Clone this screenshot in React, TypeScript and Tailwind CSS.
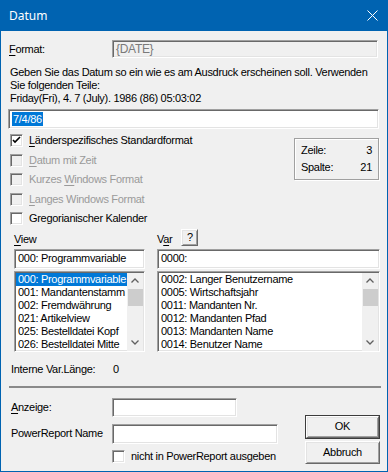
import type { ReactNode } from "react";

const sunken =
  "border border-t-[#a0a0a0] border-l-[#a0a0a0] border-b-white border-r-white shadow-[inset_1px_1px_0_#696969,inset_-1px_-1px_0_#e3e3e3]";
const raised =
  "border border-t-white border-l-white border-b-[#696969] border-r-[#696969] shadow-[inset_1px_1px_0_#e3e3e3,inset_-1px_-1px_0_#a0a0a0] bg-[#f0f0f0]";

function U({ children }: { children: ReactNode }) {
  return <span className="underline underline-offset-2">{children}</span>;
}

function Check({ checked, disabled, children }: { checked?: boolean; disabled?: boolean; children: ReactNode }) {
  return (
    <div className="flex items-center h-[19.5px]">
      <div className={`w-[13px] h-[13px] ${sunken} ${disabled ? "bg-[#f0f0f0]" : "bg-white"} flex items-center justify-center`}>
        {checked && (
          <svg width="9" height="9" viewBox="0 0 9 9">
            <path d="M1 4 L3 6 L8 1" stroke="#000" strokeWidth="1.6" fill="none" />
          </svg>
        )}
      </div>
      <span className={`ml-[6px] ${disabled ? "text-[#9a9a9a]" : "text-black"}`}>{children}</span>
    </div>
  );
}

function ScrollBar() {
  return (
    <div className="w-[16px] h-full bg-[#f0f0f0] flex flex-col items-center">
      <div className="h-[16px] flex items-center justify-center">
        <svg width="8" height="5" viewBox="0 0 8 5">
          <path d="M0.5 4.5 L4 1 L7.5 4.5" stroke="#606060" strokeWidth="1.3" fill="none" />
        </svg>
      </div>
      <div className="w-[15px] h-[17px] bg-[#cdcdcd]" />
      <div className="flex-1" />
      <div className="h-[16px] flex items-center justify-center">
        <svg width="8" height="5" viewBox="0 0 8 5">
          <path d="M0.5 0.5 L4 4 L7.5 0.5" stroke="#606060" strokeWidth="1.3" fill="none" />
        </svg>
      </div>
    </div>
  );
}

const viewItems = [
  "000: Programmvariable",
  "001: Mandantenstamm",
  "002: Fremdwährung",
  "021: Artikelview",
  "025: Bestelldatei Kopf",
  "026: Bestelldatei Mitte",
];

const varItems = [
  "0002: Langer Benutzername",
  "0005: Wirtschaftsjahr",
  "0011: Mandanten Nr.",
  "0012: Mandanten Pfad",
  "0013: Mandanten Name",
  "0014: Benutzer Name",
];

export default function App() {
  return (
    <div
      className="w-[388px] h-[472px] bg-[#f0f0f0] border border-t-0 border-[#0063b1] flex flex-col text-[11px] leading-[13px] tracking-[-0.3px] text-black overflow-hidden"
      style={{ fontFamily: '"Liberation Sans", Arial, sans-serif' }}
    >
      {/* title bar */}
      <div className="h-[31px] bg-[#0063b1] flex items-center justify-between pl-[9px] pr-[9px] -mx-px tracking-normal">
        <span className="text-white text-[12px]" style={{ fontFamily: '"Noto Sans", sans-serif' }}>
          Datum
        </span>
        <svg width="11" height="11" viewBox="0 0 11 11" className="mr-[1px]">
          <path d="M0.5 0.5 L10.5 10.5 M10.5 0.5 L0.5 10.5" stroke="#fff" strokeWidth="1" />
        </svg>
      </div>

      <div className="flex flex-col px-[7px]">
        {/* format */}
        <div className="flex items-center mt-[9px] h-[18px]">
          <span className="w-[104px] pl-[1px]">
            <U>F</U>ormat:
          </span>
          <div className={`w-[266px] h-[18px] ${sunken} bg-[#f0f0f0] text-[#7a7a7a] flex items-center pl-[3px] text-[12px]`}>
            {"{DATE}"}
          </div>
        </div>

        <div className="mt-[8px] pl-[2px] whitespace-nowrap">
          <div>Geben Sie das Datum so ein wie es am Ausdruck erscheinen soll. Verwenden</div>
          <div>Sie folgenden Teile:</div>
          <div>Friday(Fri), 4. 7 (July). 1986 (86) 05:03:02</div>
        </div>

        <div className={`mt-[4px] w-[371px] h-[20px] ${sunken} bg-white flex items-center pl-[3px]`}>
          <span className="bg-[#0078d7] text-white px-[1px] leading-[14px]">7/4/86</span>
        </div>

        {/* checkboxes + position box */}
        <div className="flex justify-between mt-[2px]">
          <div className="flex flex-col pl-[2px]">
            <Check checked>
              <U>L</U>änderspezifisches Standardformat
            </Check>
            <Check disabled>
              <U>D</U>atum mit Zeit
            </Check>
            <Check disabled>
              Kurzes <U>W</U>indows Format
            </Check>
            <Check disabled>
              <U>L</U>anges Windows Format
            </Check>
            <Check>Gregorianischer Kalender</Check>
          </div>
          <div className="mt-[7px] mr-[1px] w-[85px] h-[42px] border border-[#a0a0a0] shadow-[inset_1px_1px_0_#fff,1px_1px_0_#fff] flex flex-col justify-center px-[6px] gap-[4px]">
            <div className="flex justify-between">
              <span>Zeile:</span>
              <span>3</span>
            </div>
            <div className="flex justify-between">
              <span>Spalte:</span>
              <span>21</span>
            </div>
          </div>
        </div>

        {/* view / var */}
        <div className="flex mt-[1px] pl-[6px] gap-[12px]">
          <div className="w-[131px] flex flex-col">
            <div className="h-[16px] flex items-end">
              <span>
                <U>V</U>iew
              </span>
            </div>
            <div className={`mt-[3px] h-[20px] ${sunken} bg-white flex items-center pl-[3px]`}>
              000: Programmvariable
            </div>
            <div className={`mt-[2px] h-[81px] ${sunken} bg-white px-[1px] pt-[1px] flex`}>
              <div className="flex-1 flex flex-col overflow-hidden">
                {viewItems.map((t, i) => (
                  <div
                    key={t}
                    className={`h-[13px] shrink-0 pl-[2px] whitespace-nowrap ${i === 0 ? "bg-[#0078d7] text-white" : ""}`}
                  >
                    {t}
                  </div>
                ))}
              </div>
              <ScrollBar />
            </div>
          </div>

          <div className="w-[223px] flex flex-col">
            <div className="h-[16px] flex items-end">
              <span>
                V<U>a</U>r
              </span>
              <div className={`ml-[9px] w-[17px] h-[17px] ${raised} flex items-center justify-center self-start -mt-[1px]`}>
                ?
              </div>
            </div>
            <div className={`mt-[3px] h-[20px] ${sunken} bg-white flex items-center pl-[3px]`}>0000:</div>
            <div className={`mt-[2px] h-[81px] ${sunken} bg-white px-[1px] pt-[1px] flex`}>
              <div className="flex-1 flex flex-col overflow-hidden">
                {varItems.map((t) => (
                  <div key={t} className="h-[13px] shrink-0 pl-[2px] whitespace-nowrap">
                    {t}
                  </div>
                ))}
              </div>
              <ScrollBar />
            </div>
          </div>
        </div>

        <div className="flex mt-[11px] pl-[3px] h-[13px]">
          <span className="w-[102px]">Interne Var.Länge:</span>
          <span>0</span>
        </div>

        <div className="mt-[10px] h-[2px] w-[372px] ml-[1px] bg-[#8a8a8a]" />

        {/* bottom */}
        <div className="flex justify-between items-end mt-[10px]">
          <div className="flex flex-col pl-[3px]">
            <div className="flex items-center h-[19px]">
              <span className="w-[101px]">
                <U>A</U>nzeige:
              </span>
              <div className={`w-[125px] h-[19px] ${sunken} bg-white`} />
            </div>
            <div className="flex items-center h-[20px] mt-[7px]">
              <span className="w-[101px]">PowerReport Name</span>
              <div className={`w-[166px] h-[20px] ${sunken} bg-white`} />
            </div>
            <div className="flex items-center mt-[6px] ml-[101px] h-[14px]">
              <div className={`w-[13px] h-[13px] ${sunken} bg-white`} />
              <span className="ml-[6px]">nicht in PowerReport ausgeben</span>
            </div>
          </div>
          <div className="flex flex-col gap-[2px]">
            <div className="w-[75px] h-[24px] border border-[#3c3c3c] flex">
              <div className={`flex-1 ${raised} flex items-center justify-center`}>OK</div>
            </div>
            <div className={`w-[75px] h-[23px] ${raised} flex items-center justify-center`}>Abbruch</div>
          </div>
        </div>
      </div>
    </div>
  );
}
